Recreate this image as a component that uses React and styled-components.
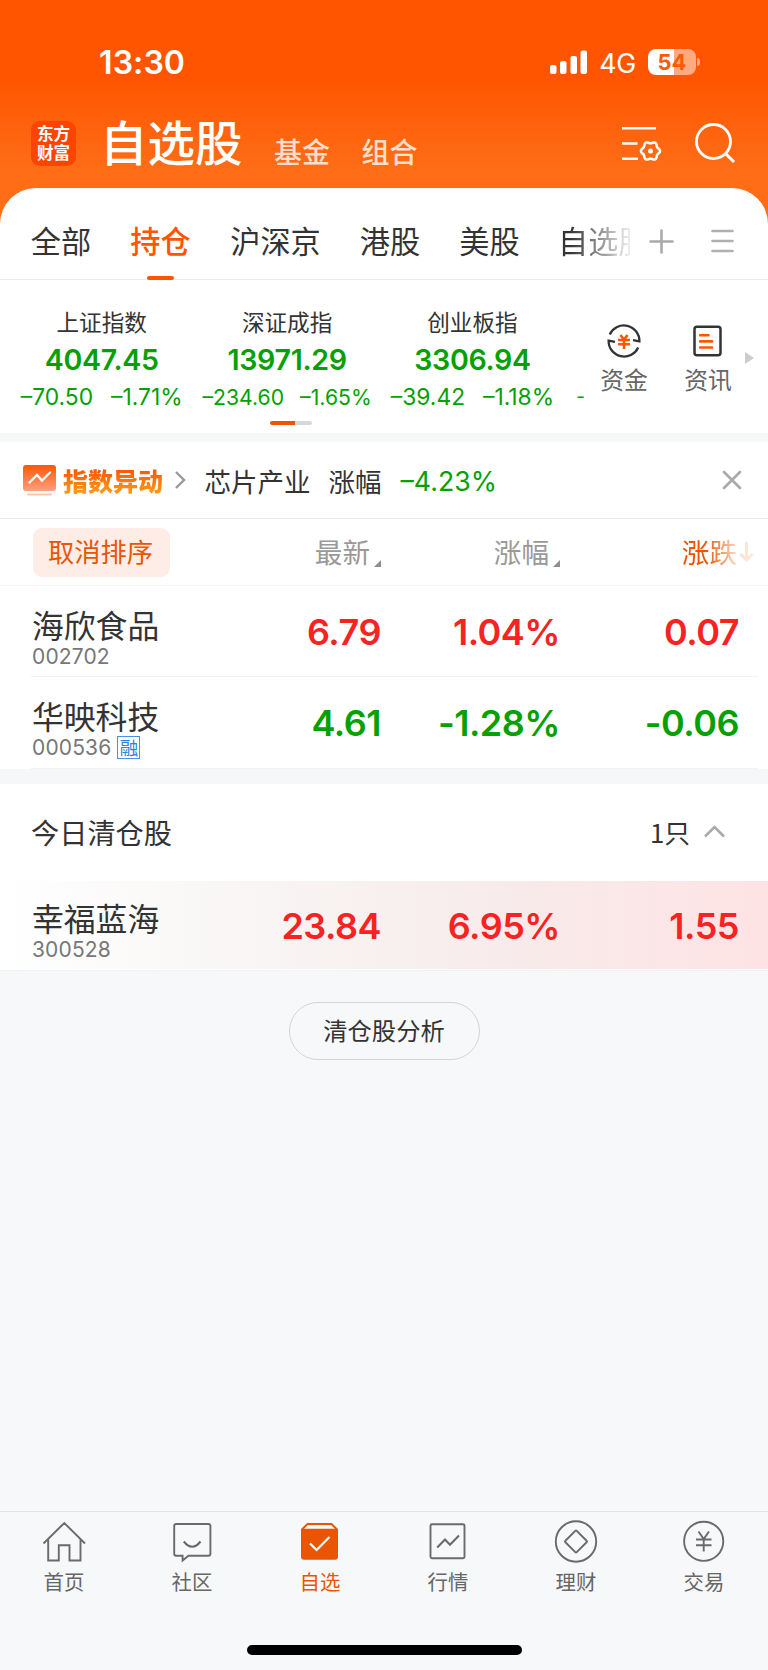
import React from "react";
import styled, { createGlobalStyle } from "styled-components";

const RED = "#f72222";
const GREEN = "#04a004";
const ORANGE = "#ea5504";
const CJK = '"Noto Sans CJK SC", sans-serif';
const LATIN = 'Inter, "Noto Sans CJK SC", sans-serif';

const GlobalStyle = createGlobalStyle`
  * { box-sizing: border-box; }
  html, body { margin: 0; background: #f7f8fa; }
  body { font-family: ${CJK}; color: #333; }
  svg { display: block; flex: none; overflow: visible; }
`;

const Screen = styled.div`
  width: 768px;
  height: 1670px;
  display: flex;
  flex-direction: column;
  overflow: hidden;
  background: #f7f8fa;
  white-space: nowrap;
`;

/* ---------- header ---------- */

const Hero = styled.header`
  flex: none;
  height: 236px;
  margin-bottom: -48px;
  background: linear-gradient(180deg, #ff5500 0, #ff5500 78px, #ff6d17 170px, #ff6d17 100%);
  color: #fff;
`;

const StatusBar = styled.div`
  height: 98px;
  padding: 26px 68px 0 99px;
  display: flex;
  align-items: center;
  font-family: ${LATIN};
`;

const Clock = styled.span`
  flex: 1;
  font-size: 32px;
  font-weight: 600;
  letter-spacing: 0.1px;
`;

const Network = styled.span`
  margin: 1px 12px 0 12px;
  font-size: 26.8px;
  letter-spacing: -0.3px;
`;

const Battery = styled.span`
  width: 48px;
  height: 26px;
  border-radius: 8px;
  display: flex;
  align-items: center;
  justify-content: center;
  background: linear-gradient(90deg, #fff 26px, #ffaa80 26px);
  color: #fb5a08;
  font-size: 22px;
  font-weight: 700;
`;

const BatteryTip = styled.span`
  width: 3px;
  height: 8px;
  margin-left: 1px;
  border-radius: 0 3px 3px 0;
  background: #ffaa80;
`;

const TitleBar = styled.div`
  height: 90px;
  padding: 0 33px 0 31px;
  display: flex;
  align-items: flex-start;
`;

const Logo = styled.div`
  width: 45px;
  height: 45px;
  margin-top: 23px;
  border-radius: 9px;
  display: flex;
  flex-direction: column;
  align-items: center;
  justify-content: center;
  background: #ff4400;
  font-size: 16.6px;
  font-weight: 700;
  line-height: 19px;
  padding-bottom: 1px;
`;

const Title = styled.h1`
  margin: 10px 0 0 24px;
  font-size: 47.5px;
  font-weight: 500;
  line-height: 66px;
`;

const TopLink = styled.span`
  margin: 33px 0 0 ${(p) => p.$gap}px;
  font-size: 28px;
  font-weight: 500;
  line-height: 40px;
  color: rgba(255, 255, 255, 0.8);
`;

const HeaderIcons = styled.div`
  margin-left: auto;
  margin-top: 25px;
  display: flex;
  gap: 34px;
`;

/* ---------- tabs ---------- */

const Sheet = styled.main`
  flex: none;
  background: #fff;
  border-radius: 36px 36px 0 0;
`;

const Tabs = styled.nav`
  height: 92px;
  padding: 0 34px 0 31px;
  display: flex;
  align-items: stretch;
  border-bottom: 1px solid #ebebeb;
`;

const Tab = styled.div`
  flex: none;
  width: ${(p) => p.$width}px;
  margin-right: 39px;
  padding-top: 30px;
  display: flex;
  flex-direction: column;
  align-items: center;
  justify-content: space-between;
  font-size: 30.2px;
  line-height: 44px;
  height: 92px;
  font-weight: ${(p) => (p.$active ? 500 : 400)};
  color: ${(p) => (p.$active ? "#ff5500" : "#333")};
  &::after {
    content: "";
    width: 27px;
    height: 4px;
    border-radius: 2px;
    background: ${(p) => (p.$active ? "#ff5500" : "transparent")};
  }
`;

const ClippedTab = styled.div`
  flex: none;
  width: 72px;
  margin-left: -1px;
  padding-top: 30px;
  overflow: hidden;
  font-size: 30.2px;
  line-height: 44px;
  mask-image: linear-gradient(90deg, #000 12px, rgba(0, 0, 0, 0.1) 70px);
`;

const TabTools = styled.div`
  margin-left: auto;
  display: flex;
  align-items: center;
  gap: 37px;
  padding-top: 15px;
`;

/* ---------- indices ---------- */

const IndexStrip = styled.section`
  height: 153px;
  display: flex;
`;

const IndexScroller = styled.div`
  width: 584px;
  flex: none;
  overflow: hidden;
  position: relative;
  display: flex;
  padding: 25px 0 0 9px;
`;

const IndexCard = styled.div`
  flex: none;
  width: 185.4px;
  display: flex;
  flex-direction: column;
  align-items: center;
`;

const IndexName = styled.div`
  font-size: 22.6px;
  line-height: 34px;
`;

const IndexValue = styled.div`
  margin-top: 2px;
  font: 600 28.6px/38px ${LATIN};
  letter-spacing: -0.3px;
  color: ${GREEN};
`;

const IndexChange = styled.div`
  display: flex;
  justify-content: center;
  gap: ${(p) => (p.$compact ? 16 : 18)}px;
  font: 400 ${(p) => (p.$compact ? 21.2 : 22.8)}px/36px ${LATIN};
  color: ${GREEN};
`;

const NextIndex = styled.span`
  margin: 74px 0 0 11px;
  font: 400 19px/36px ${LATIN};
  color: ${GREEN};
`;

const Pager = styled.span`
  position: absolute;
  left: 270px;
  bottom: 8px;
  width: 42px;
  height: 4px;
  border-radius: 2px;
  background: linear-gradient(90deg, ${ORANGE} 25px, #d5d8dd 25px);
`;

const Shortcuts = styled.div`
  flex: 1;
  padding: 43px 14px 0 16px;
  display: flex;
  align-items: flex-start;
`;

const Shortcut = styled.div`
  width: 48px;
  margin-right: ${(p) => p.$gap}px;
  display: flex;
  flex-direction: column;
  align-items: center;
  gap: 3px;
  font-size: 23.8px;
  line-height: 34px;
  color: #666;
`;

const NextArrow = styled.span`
  margin-top: 29px;
  border-left: 9px solid #ccc;
  border-top: 6px solid transparent;
  border-bottom: 6px solid transparent;
`;

const Band = styled.div`
  height: ${(p) => p.$size}px;
  background: #f5f7f9;
`;

/* ---------- alert ---------- */

const Alert = styled.section`
  height: 77px;
  padding: 0 27px 0 23px;
  display: flex;
  align-items: center;
  border-bottom: 1px solid #ebebeb;
  font-size: 26.5px;
`;

const AlertTag = styled.span`
  margin: 0 12px 0 7px;
  font-size: 25px;
  font-weight: 900;
  line-height: 36px;
  background: linear-gradient(180deg, #ff5a05 25%, #ff9416 80%);
  background-clip: text;
  -webkit-background-clip: text;
  color: transparent;
`;

const AlertText = styled.span`
  margin-left: ${(p) => p.$gap}px;
`;

const AlertChange = styled.span`
  margin: 2px auto 0 19px;
  font-family: ${LATIN};
  font-size: 26.7px;
  color: ${GREEN};
`;

/* ---------- table ---------- */

const columns = `
  display: grid;
  grid-template-columns: 250px 99px 179px 179px;
`;

const TableHead = styled.div`
  ${columns}
  height: 67px;
  padding-left: 32px;
  align-items: center;
  border-bottom: 1px solid #f5f5f5;
`;

const SortPill = styled.span`
  justify-self: start;
  margin-left: 1px;
  width: 137px;
  height: 49px;
  border-radius: 9px;
  display: flex;
  align-items: center;
  justify-content: center;
  padding: 0 2px 2px 0;
  background: #fdede6;
  color: ${ORANGE};
  font-size: 26.3px;
  line-height: 46px;
`;

const HeadCell = styled.span`
  justify-self: end;
  display: flex;
  align-items: flex-end;
  gap: 4px;
  margin-bottom: 2px;
  font-size: 27.6px;
  line-height: 40px;
  color: #999;
  svg { margin-bottom: 4px; }
`;

const FadingHead = styled(HeadCell)`
  margin-right: -15px;
  gap: 2px;
  color: ${ORANGE};
  mask-image: linear-gradient(90deg, #000 24px, rgba(0, 0, 0, 0.18) 56px, rgba(0, 0, 0, 0.12) 73px);
  svg { margin-bottom: 9px; }
`;

const Row = styled.div`
  ${columns}
  height: ${(p) => p.$height}px;
  padding-left: 32px;
  align-items: start;
  background: ${(p) =>
    p.$highlight
      ? "linear-gradient(90deg, #fff 0, #f8f5f4 34%, #f8eaea 68%, #fee3e4 100%)"
      : "linear-gradient(#f2f2f2, #f2f2f2) 31px 100% / 727px 1px no-repeat"};
`;

const StockInfo = styled.div`
  padding-top: ${(p) => (p.$highlight ? 16 : 18)}px;
`;

const StockName = styled.div`
  font-size: 31.8px;
  line-height: 41px;
`;

const StockCode = styled.div`
  height: 24px;
  display: flex;
  align-items: center;
  gap: 6px;
  font: 400 21px/24px ${LATIN};
  letter-spacing: 0.15px;
  color: #777;
`;

const MarginBadge = styled.span`
  width: 23px;
  height: 23px;
  margin-bottom: 1px;
  border: 1px solid #4a90e8;
  display: flex;
  align-items: center;
  justify-content: center;
  font: 400 18.5px/20px ${CJK};
  letter-spacing: 0;
  padding-bottom: 1px;
  color: #2f80e0;
`;

const Num = styled.div`
  justify-self: end;
  padding-top: ${(p) => (p.$highlight ? 22.5 : 23.5)}px;
  font: 600 36px/44px ${LATIN};
  letter-spacing: -0.5px;
  color: ${(p) => (p.$down ? GREEN : RED)};
`;

const ClearedHead = styled.div`
  height: 97px;
  padding: 0 43px 3px 31px;
  display: flex;
  align-items: center;
  justify-content: space-between;
  font-size: 28.2px;
`;

const ClearedCount = styled.span`
  display: flex;
  align-items: center;
  gap: 14px;
  font-size: 25.8px;
`;

const RowFoot = styled.div`
  height: 2px;
  border-bottom: 1px solid #f2f2f2;
`;

const AnalysisButton = styled.button`
  flex: none;
  align-self: center;
  margin: 31px 0 0;
  padding: 0 0 2px;
  width: 191px;
  height: 58px;
  border: 1px solid #d3d4d6;
  border-radius: 29px;
  background: transparent;
  color: #333;
  font: 400 24.3px/40px ${CJK};
`;

/* ---------- bottom bar ---------- */

const BottomBar = styled.footer`
  margin-top: auto;
  flex: none;
  height: 159px;
  border-top: 1px solid #e2e3e5;
  display: flex;
  flex-direction: column;
  align-items: center;
  justify-content: space-between;
  padding-bottom: 15px;
`;

const NavList = styled.nav`
  width: 768px;
  display: grid;
  grid-template-columns: repeat(6, 1fr);
`;

const NavItem = styled.div`
  padding-top: 8px;
  display: flex;
  flex-direction: column;
  align-items: center;
  gap: 2px;
  font-size: 20.4px;
  line-height: 30px;
  color: ${(p) => (p.$active ? ORANGE : "#666")};
`;

const HomeIndicator = styled.div`
  width: 275px;
  height: 10px;
  border-radius: 5px;
  background: #000;
`;

/* ---------- drawings ---------- */

const Signal = () => (
  <svg width="37" height="24" fill="#fff">
    <rect x="0" y="15" width="6.5" height="9" rx="2" />
    <rect x="10" y="11" width="6.5" height="13" rx="2" />
    <rect x="20.5" y="6" width="6.5" height="18" rx="2" />
    <rect x="30.5" y="0.5" width="6.5" height="23.5" rx="2" />
  </svg>
);

const gearPath = (() => {
  const pts = [];
  for (let i = 0; i <= 72; i++) {
    const a = (i / 72) * Math.PI * 2;
    const r = 8.6 + 0.9 * Math.cos(6 * a);
    pts.push(`${(28.5 + r * Math.cos(a)).toFixed(2)} ${(28 + r * Math.sin(a)).toFixed(2)}`);
  }
  return `M${pts.join("L")}Z`;
})();

const FilterIcon = () => (
  <svg width="39" height="40" fill="none" stroke="#fff" strokeWidth="2.6">
    <path d="M0 5.2H34M0 20.5H15.5M0 35.8H16" />
    <path d={gearPath} strokeLinejoin="round" />
    <circle cx="28.5" cy="28" r="2.5" fill="#fff" stroke="none" />
  </svg>
);

const SearchIcon = () => (
  <svg width="40" height="40" fill="none" stroke="#fff" strokeWidth="2.8">
    <circle cx="18.5" cy="18.5" r="17" />
    <path d="M30.5 30.5L39 39" strokeWidth="3" />
  </svg>
);

const PlusIcon = () => (
  <svg width="25" height="25" stroke="#aaa" strokeWidth="2.6" strokeLinecap="round">
    <path d="M1.5 12.5H23.5M12.5 1.5V23.5" />
  </svg>
);

const MenuIcon = () => (
  <svg width="23" height="24" stroke="#b0b0b0" strokeWidth="2.6" strokeLinecap="round">
    <path d="M1.5 2H21.5M1.5 12H21.5M1.5 22H21.5" />
  </svg>
);

const FundIcon = () => (
  <svg width="36" height="36" fill="none" strokeWidth="2.3">
    <g stroke="#333">
      <path d="M3.8 11.5A15.5 15.5 0 0 1 33.4 18.4L27 17.2" />
      <path d="M32.2 24.5A15.5 15.5 0 0 1 2.6 17.6L9 18.8" />
    </g>
    <path d="M14.5 12L18 16.5L21.5 12M12 17H24M12 21.3H24M18 16.5V26" stroke="#ff5500" strokeWidth="2.6" />
  </svg>
);

const NewsIcon = () => (
  <svg width="36" height="36" fill="none" strokeWidth="2.5">
    <rect x="4.5" y="3.8" width="26" height="28.5" rx="2.5" stroke="#333" />
    <path d="M10.2 12.2H18.5M10.2 18.4H22M10.2 24.5H22" stroke="#ff5500" strokeWidth="2.6" strokeLinecap="round" />
  </svg>
);

const AlertIcon = () => (
  <svg width="33" height="31" fill="none">
    <defs>
      <linearGradient id="alertFill" x1="0" y1="0" x2="0" y2="1">
        <stop offset="0" stopColor="#ff5705" />
        <stop offset="1" stopColor="#ff9f80" />
      </linearGradient>
    </defs>
    <rect width="33" height="26" rx="3" fill="url(#alertFill)" />
    <path d="M6.5 17.5L14 10L19 15.5L27 7.5" stroke="#fff" strokeWidth="2.3" strokeLinecap="round" />
    <path d="M5 29.5H28" stroke="#ffc3ab" strokeWidth="2" strokeLinecap="round" />
  </svg>
);

const ChevronRight = () => (
  <svg width="10" height="18" fill="none" stroke="#999" strokeWidth="2.4">
    <path d="M1 1L9 9L1 17" />
  </svg>
);

const ChevronUp = () => (
  <svg width="21" height="12" fill="none" stroke="#aaa" strokeWidth="2.6">
    <path d="M1 11.5L10.5 2L20 11.5" />
  </svg>
);

const CloseIcon = () => (
  <svg width="18" height="18" stroke="#aaa" strokeWidth="2.6" strokeLinecap="round">
    <path d="M1 1L17 17M17 1L1 17" />
  </svg>
);

const SortMark = () => (
  <svg width="7" height="7" fill="#8d8d93">
    <path d="M7 0V7H0Z" />
  </svg>
);

const SortDown = () => (
  <svg width="15" height="20" fill="none" stroke={ORANGE} strokeWidth="3">
    <path d="M7.5 0V18M1.5 12L7.5 18L13.5 12" />
  </svg>
);

const NavIcon = ({ name }) => (
  <svg width="44" height="44" fill="none" stroke="#6a6a6a" strokeWidth="1.9">
    {name === "home" && (
      <path d="M1.5 23.5L22.3 3L43 23.5M6.2 19.5V40.5H16.8V25.3H27.5V40.5H38.5V19.5" />
    )}
    {name === "chat" && (
      <>
        <path d="M6.2 4H38.4Q40.4 4 40.4 6V33.8Q40.4 35.8 38.4 35.8H18.5L12.6 40.5V35.8H6.2Q4.2 35.8 4.2 33.8V6Q4.2 4 6.2 4Z" />
        <path d="M13.8 21.5Q22.3 32 30.5 21.5" strokeWidth="2.1" />
      </>
    )}
    {name === "picks" && (
      <>
        <rect x="3" y="8.8" width="37" height="31" rx="3" fill={ORANGE} stroke="none" />
        <path d="M4 11V9.5L9.5 4H33.5L39 9.5V11" stroke={ORANGE} strokeWidth="2" />
        <path d="M12 23.5L18.6 30L31.5 17" stroke="#fff" strokeWidth="2.2" />
      </>
    )}
    {name === "market" && (
      <>
        <rect x="4.5" y="4.2" width="34" height="34" rx="1.5" />
        <path d="M11.2 27.5L19 19.5L24 24.8L33 15.5" strokeWidth="2.1" />
      </>
    )}
    {name === "wealth" && (
      <>
        <circle cx="22" cy="21.5" r="20.2" />
        <rect x="14" y="13.5" width="16" height="16" rx="1" transform="rotate(45 22 21.5)" />
      </>
    )}
    {name === "trade" && (
      <>
        <circle cx="21.7" cy="21.3" r="19.6" />
        <path d="M16.5 11.5L21.7 19L27 11.5M14 19.5H29.5M14 25.2H29.5M21.7 19V31.5" />
      </>
    )}
  </svg>
);

/* ---------- data ---------- */

const indices = [
  { name: "上证指数", value: "4047.45", diff: "–70.50", pct: "–1.71%" },
  { name: "深证成指", value: "13971.29", diff: "–234.60", pct: "–1.65%", compact: true },
  { name: "创业板指", value: "3306.94", diff: "–39.42", pct: "–1.18%" },
];

const holdings = [
  { name: "海欣食品", code: "002702", price: "6.79", pct: "1.04%", diff: "0.07" },
  { name: "华映科技", code: "000536", price: "4.61", pct: "-1.28%", diff: "-0.06", down: true, margin: true },
];

const cleared = { name: "幸福蓝海", code: "300528", price: "23.84", pct: "6.95%", diff: "1.55" };

const navItems = [
  ["home", "首页"],
  ["chat", "社区"],
  ["picks", "自选"],
  ["market", "行情"],
  ["wealth", "理财"],
  ["trade", "交易"],
];

const StockRow = ({ stock, highlight, height }) => (
  <Row $highlight={highlight} $height={height}>
    <StockInfo $highlight={highlight}>
      <StockName>{stock.name}</StockName>
      <StockCode>
        {stock.code}
        {stock.margin && <MarginBadge>融</MarginBadge>}
      </StockCode>
    </StockInfo>
    {[stock.price, stock.pct, stock.diff].map((v) => (
      <Num key={v} $down={stock.down} $highlight={highlight}>{v}</Num>
    ))}
  </Row>
);

export default function App() {
  return (
    <Screen>
      <GlobalStyle />
      <Hero>
        <StatusBar>
          <Clock>13:30</Clock>
          <Signal />
          <Network>4G</Network>
          <Battery>54</Battery>
          <BatteryTip />
        </StatusBar>
        <TitleBar>
          <Logo>
            <span>东方</span>
            <span>财富</span>
          </Logo>
          <Title>自选股</Title>
          <TopLink $gap={31.5}>基金</TopLink>
          <TopLink $gap={31.5}>组合</TopLink>
          <HeaderIcons>
            <FilterIcon />
            <SearchIcon />
          </HeaderIcons>
        </TitleBar>
      </Hero>

      <Sheet>
        <Tabs>
          <Tab $width={60}>全部</Tab>
          <Tab $width={61} $active>持仓</Tab>
          <Tab $width={91}>沪深京</Tab>
          <Tab $width={60}>港股</Tab>
          <Tab $width={61}>美股</Tab>
          <ClippedTab>自选股</ClippedTab>
          <TabTools>
            <PlusIcon />
            <MenuIcon />
          </TabTools>
        </Tabs>

        <IndexStrip>
          <IndexScroller>
            {indices.map((i) => (
              <IndexCard key={i.name}>
                <IndexName>{i.name}</IndexName>
                <IndexValue>{i.value}</IndexValue>
                <IndexChange $compact={i.compact}>
                  <span>{i.diff}</span>
                  <span>{i.pct}</span>
                </IndexChange>
              </IndexCard>
            ))}
            <NextIndex>-</NextIndex>
            <Pager />
          </IndexScroller>
          <Shortcuts>
            <Shortcut $gap={36}>
              <FundIcon />
              资金
            </Shortcut>
            <Shortcut $gap={13}>
              <NewsIcon />
              资讯
            </Shortcut>
            <NextArrow />
          </Shortcuts>
        </IndexStrip>
        <Band $size={9} />

        <Alert>
          <AlertIcon />
          <AlertTag>指数异动</AlertTag>
          <ChevronRight />
          <AlertText $gap={19.5}>芯片产业</AlertText>
          <AlertText $gap={18}>涨幅</AlertText>
          <AlertChange>–4.23%</AlertChange>
          <CloseIcon />
        </Alert>

        <TableHead>
          <SortPill>取消排序</SortPill>
          <HeadCell>最新<SortMark /></HeadCell>
          <HeadCell>涨幅<SortMark /></HeadCell>
          <FadingHead>涨跌<SortDown /></FadingHead>
        </TableHead>
        <StockRow stock={holdings[0]} height={91} />
        <StockRow stock={holdings[1]} height={92} />
        <Band $size={15} />

        <ClearedHead>
          今日清仓股
          <ClearedCount>
            1只
            <ChevronUp />
          </ClearedCount>
        </ClearedHead>
        <StockRow stock={cleared} height={88} highlight />
        <RowFoot />
      </Sheet>

      <AnalysisButton>清仓股分析</AnalysisButton>

      <BottomBar>
        <NavList>
          {navItems.map(([icon, label]) => (
            <NavItem key={icon} $active={icon === "picks"}>
              <NavIcon name={icon} />
              {label}
            </NavItem>
          ))}
        </NavList>
        <HomeIndicator />
      </BottomBar>
    </Screen>
  );
}
